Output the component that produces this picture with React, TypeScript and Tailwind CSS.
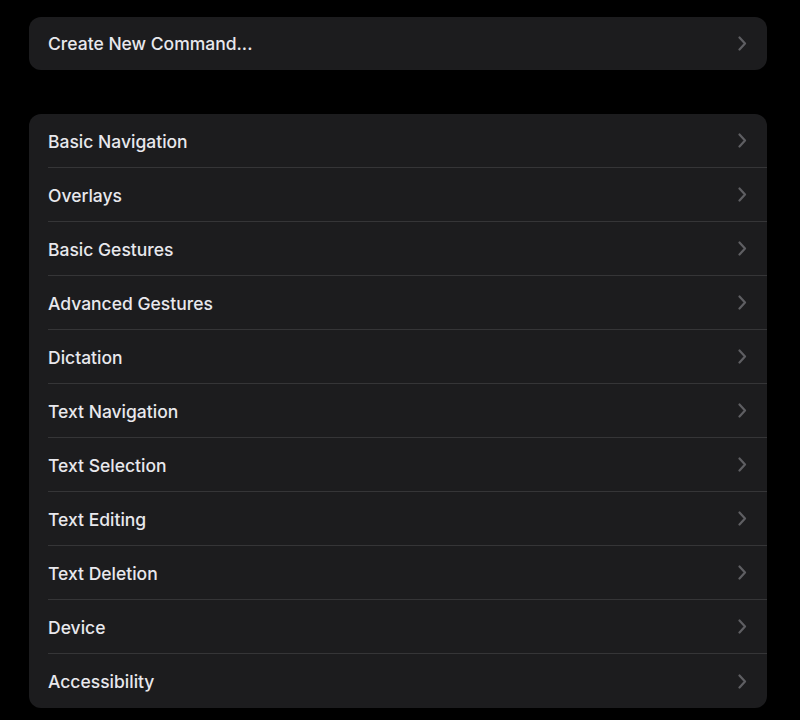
import React from "react";

const items = [
  "Basic Navigation",
  "Overlays",
  "Basic Gestures",
  "Advanced Gestures",
  "Dictation",
  "Text Navigation",
  "Text Selection",
  "Text Editing",
  "Text Deletion",
  "Device",
  "Accessibility",
];

function Chevron() {
  return (
    <svg width="9" height="15" viewBox="0 0 9 15" fill="none" className="shrink-0">
      <path d="M1.5 1.5L7 7.5L1.5 13.5" stroke="#5e5e62" strokeWidth="2.2" strokeLinecap="round" strokeLinejoin="round" />
    </svg>
  );
}

function Row({ label, last }: { label: string; last?: boolean }) {
  return (
    <div className="flex h-[54px] items-center pl-[19px]">
      <div className={`flex h-full flex-1 items-center justify-between pr-[20px] ${last ? "" : "border-b border-[#353537]"}`}>
        <span className="pt-[3px] text-[17.5px] font-medium text-[#e8e8ed]">{label}</span>
        <Chevron />
      </div>
    </div>
  );
}

export default function App() {
  return (
    <div className="min-h-[720px] w-full bg-black pt-[17px] pl-[29px] pr-[33px]" style={{ fontFamily: "Inter, 'Liberation Sans', sans-serif" }}>
      <div className="flex h-[53px] items-center justify-between rounded-[12px] bg-[#1c1c1e] pl-[19px] pr-[20px]">
        <span className="pt-[1px] text-[17.5px] font-medium text-[#e8e8ed]">Create New Command...</span>
        <Chevron />
      </div>
      <div className="mt-[44px] overflow-hidden rounded-[12px] bg-[#1c1c1e]">
        {items.map((it, i) => (
          <Row key={it} label={it} last={i === items.length - 1} />
        ))}
      </div>
    </div>
  );
}
